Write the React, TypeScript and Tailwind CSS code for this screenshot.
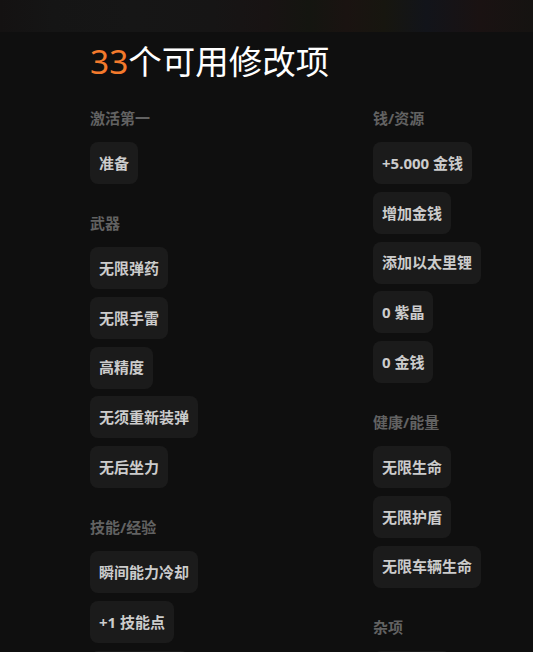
import React from "react";

type Section = { title: string; items: string[] };

const left: Section[] = [
  { title: "激活第一", items: ["准备"] },
  { title: "武器", items: ["无限弹药", "无限手雷", "高精度", "无须重新装弹", "无后坐力"] },
  { title: "技能/经验", items: ["瞬间能力冷却", "+1 技能点", "+1 经验等级"] },
];

const right: Section[] = [
  { title: "钱/资源", items: ["+5.000 金钱", "增加金钱", "添加以太里锂", "0 紫晶", "0 金钱"] },
  { title: "健康/能量", items: ["无限生命", "无限护盾", "无限车辆生命"] },
  { title: "杂项", items: ["冻结时间"] },
];

function Column({ sections }: { sections: Section[] }) {
  return (
    <div className="flex flex-col gap-[29px] w-[283px] shrink-0">
      {sections.map((s) => (
        <div key={s.title} className="flex flex-col">
          <div className="text-[15px] leading-[20px] font-bold text-[#626262] mb-[14px]">{s.title}</div>
          <div className="flex flex-col items-start gap-[7.75px]">
            {s.items.map((it) => (
              <div
                key={it}
                className="h-[42px] px-[9px] flex items-center rounded-lg bg-[#1b1b1b] text-[15px] font-bold text-[#cccccc] whitespace-nowrap"
              >
                {it}
              </div>
            ))}
          </div>
        </div>
      ))}
    </div>
  );
}

export default function App() {
  return (
    <div
      className="w-[533px] h-[652px] overflow-hidden bg-[#0f0f0f]"
      style={{ fontFamily: "'Noto Sans', 'Noto Sans CJK SC', sans-serif" }}
    >
      <div className="h-[32px] bg-[linear-gradient(90deg,#141212_0%,#151515_10%,#161616_25%,#161515_40%,#181313_50%,#141510_58%,#1a1311_65%,#17160f_72%,#12141a_80%,#1a1212_90%,#151311_100%)]" />
      <div className="pl-[90px]">
        <div className="mt-[7px] h-[44px] flex items-center text-[33.5px] leading-[44px] text-white">
          <span className="text-[#f47a2c]">33</span>
          <span>个可用修改项</span>
        </div>
        <div className="mt-[25px] flex">
          <Column sections={left} />
          <Column sections={right} />
        </div>
      </div>
    </div>
  );
}
